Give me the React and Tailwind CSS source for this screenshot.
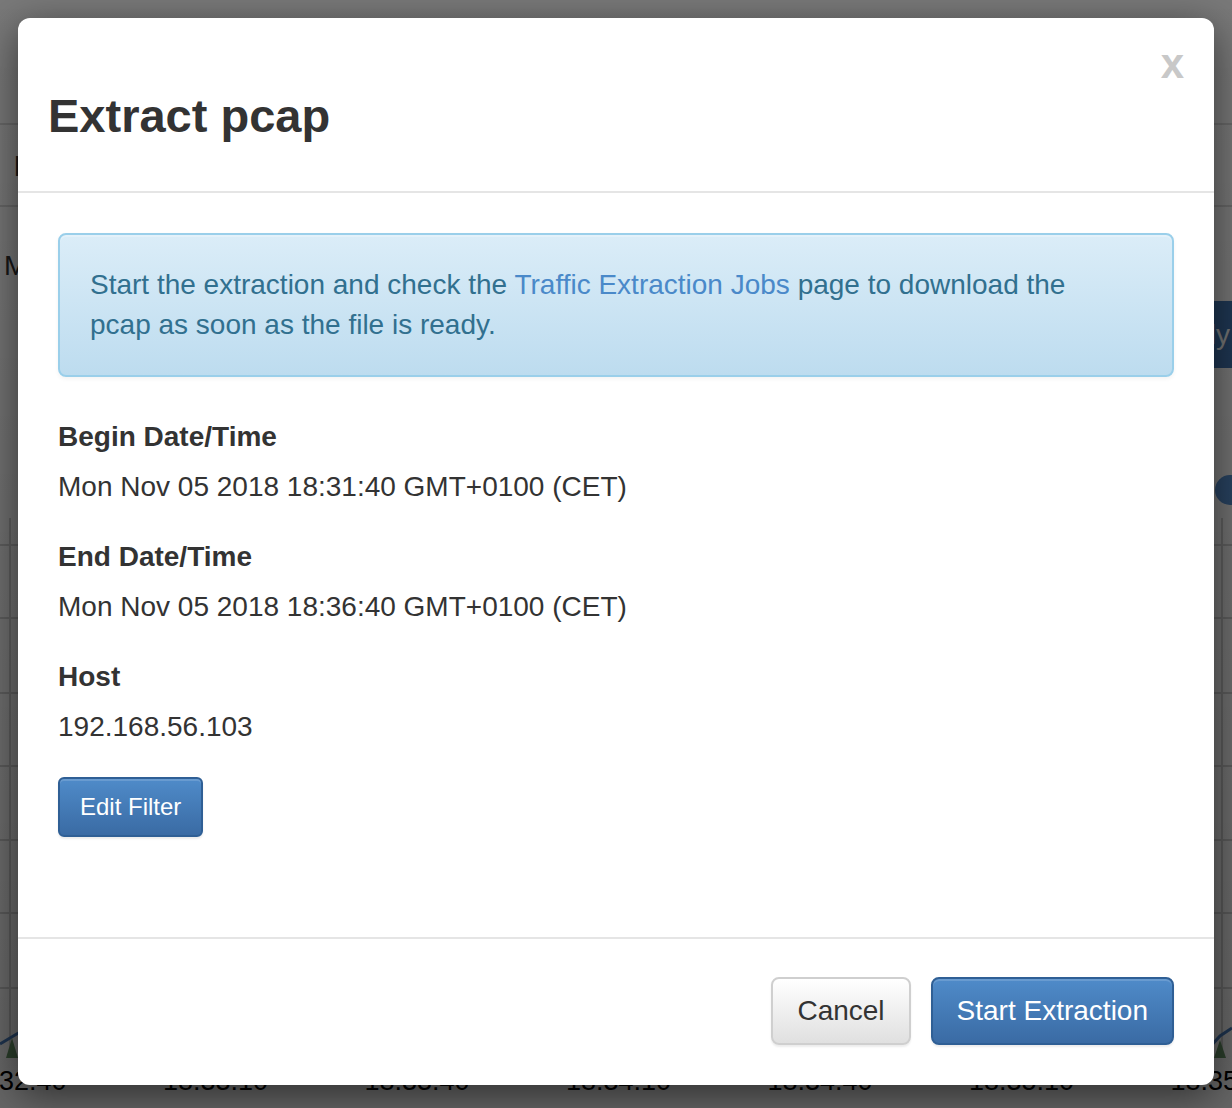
import React from "react";

const font = { fontFamily: '"Liberation Sans", Arial, Helvetica, sans-serif' };

const fields = [
  { label: "Begin Date/Time", value: "Mon Nov 05 2018 18:31:40 GMT+0100 (CET)" },
  { label: "End Date/Time", value: "Mon Nov 05 2018 18:36:40 GMT+0100 (CET)" },
  { label: "Host", value: "192.168.56.103" },
];

const ticks = ["18:32:40", "18:33:10", "18:33:40", "18:34:10", "18:34:40", "18:35:10", "18:35:40"];

// background chart behind the backdrop (mostly hidden by the modal)
function Chart() {
  const rows = [177, 250, 325, 398, 472, 545, 620];
  return (
    <svg width="1232" height="738" className="block">
      {rows.map((y) => (
        <line key={y} x1="0" x2="1232" y1={y} y2={y} stroke="#d4d4d4" strokeWidth="2" />
      ))}
      <line x1="10" x2="10" y1="150" y2="690" stroke="#d4d4d4" strokeWidth="2" />
      <line x1="1222" x2="1222" y1="150" y2="690" stroke="#d4d4d4" strokeWidth="2" />
      <circle cx="1230" cy="122" r="15" fill="#5b95d6" />
      <polyline points="0,676 20,664 40,656" fill="none" stroke="#4a7fc0" strokeWidth="3" />
      <polygon points="6,690 12,670 18,690" fill="#6b9a6b" />
      <polyline points="1200,690 1220,668 1232,660" fill="none" stroke="#4a7fc0" strokeWidth="3" />
      <polygon points="1214,690 1220,672 1226,690" fill="#6b9a6b" />
      {ticks.map((t, i) => (
        <text
          key={t}
          x={14 + i * 201.5}
          y="722"
          textAnchor="middle"
          fontSize="27"
          fill="#000"
          fontFamily='"Liberation Sans", Arial, sans-serif'
        >
          {t}
        </text>
      ))}
    </svg>
  );
}

export default function App() {
  return (
    <div className="relative w-[1232px] h-[1108px] overflow-hidden bg-white text-[#333]" style={font}>
      {/* Page behind the modal */}
      <div className="h-[125px] border-b-2 border-[#dcdcdc]" />
      <div className="h-[82px] border-b-2 border-[#dcdcdc] flex items-center pl-[14px]">
        <span className="text-[30px] font-bold">Interfaces</span>
      </div>
      <div className="pt-[39px] pl-[4px] text-[28px] leading-[40px]">Monitoring</div>
      <div className="flex justify-end mt-[15px]">
        <button className="h-[67px] px-[24px] mr-[-22px] rounded-[8px] bg-[#4276b4] text-white text-[28px]">
          Apply
        </button>
      </div>
      <Chart />

      {/* Backdrop + modal */}
      <div className="absolute inset-0 bg-black/50 bg-gradient-to-b from-black/5 to-black/20 pt-[18px] px-[18px]">
        <div className="w-[1196px] rounded-[12px] bg-white shadow-[0_10px_40px_rgba(0,0,0,0.55)]">
          {/* Header */}
          <div className="flex items-start justify-between px-[30px] pt-[30px] pb-[30px] border-b-2 border-[#e5e5e5]">
            <h3 className="mt-[41px] mb-[19px] text-[47px] leading-[53px] font-bold text-[#333]">Extract pcap</h3>
            <button className="mt-[-5px] text-[42px] leading-[42px] font-bold text-[#c8c8c8]">x</button>
          </div>

          {/* Body */}
          <div className="p-[40px] text-[28px] leading-[40px]">
            <div className="mb-[40px] pl-[30px] pr-[64px] py-[30px] rounded-[8px] border-2 border-[#9acfea] bg-gradient-to-b from-[#dbedf8] to-[#bddcef] text-[#31708f] shadow-[inset_0_2px_0_rgba(255,255,255,0.25),0_2px_4px_rgba(0,0,0,0.05)]">
              Start the extraction and check the{" "}
              <a className="text-[#4a89c9]">Traffic Extraction Jobs</a> page to download the pcap as soon as the
              file is ready.
            </div>

            {fields.map((f) => (
              <div key={f.label} className="mb-[30px]">
                <div className="font-bold mb-[10px]">{f.label}</div>
                <div>{f.value}</div>
              </div>
            ))}

            <div className="mb-[60px]">
              <button className="h-[60px] px-[20px] rounded-[6px] border-2 border-[#2f5f95] bg-gradient-to-b from-[#4f8bc9] to-[#3a6ba4] text-white text-[24px] leading-[36px] shadow-[inset_0_2px_0_rgba(255,255,255,0.15),0_2px_2px_rgba(0,0,0,0.075)]">
                Edit Filter
              </button>
            </div>
          </div>

          {/* Footer */}
          <div className="flex justify-end gap-[20px] px-[40px] pt-[38px] pb-[40px] border-t-2 border-[#e5e5e5]">
            <button className="h-[68px] px-[24px] rounded-[8px] border-2 border-[#cfcfcf] bg-gradient-to-b from-white to-[#e0e0e0] text-[#333] text-[28px] leading-[40px] shadow-[inset_0_2px_0_rgba(255,255,255,0.15),0_2px_2px_rgba(0,0,0,0.075)]">
              Cancel
            </button>
            <button className="h-[68px] px-[24px] rounded-[8px] border-2 border-[#2f5f95] bg-gradient-to-b from-[#4f8bc9] to-[#3a6ba4] text-white text-[28px] leading-[40px] shadow-[inset_0_2px_0_rgba(255,255,255,0.15),0_2px_2px_rgba(0,0,0,0.075)]">
              Start Extraction
            </button>
          </div>
        </div>
      </div>
    </div>
  );
}
